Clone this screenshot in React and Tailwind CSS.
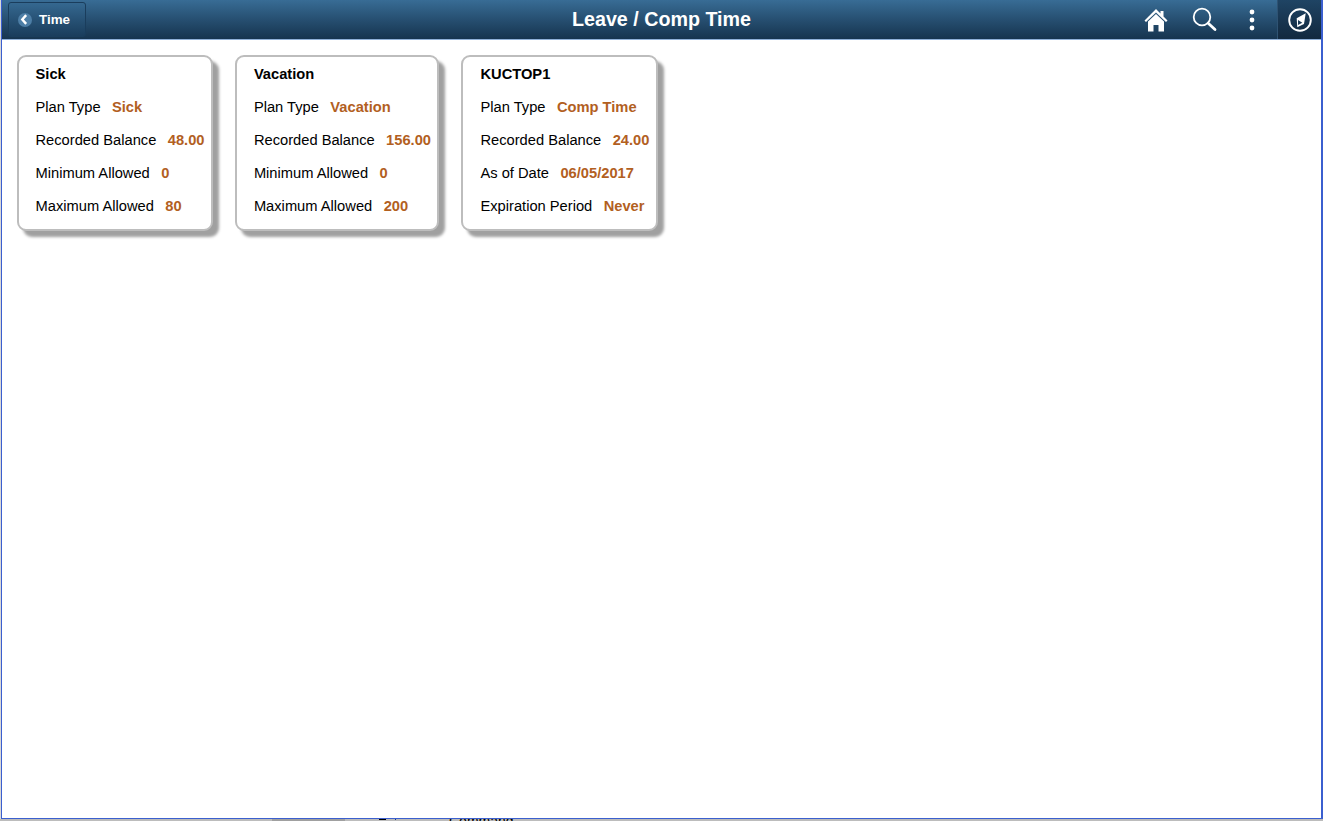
const FONT = "font-['Liberation_Sans',Arial,sans-serif]";

function Row({ label, value }) {
  return (
    <div className="flex h-[33px] items-center whitespace-nowrap">
      <span className="text-[14.7px] text-black">{label}</span>
      <span className="ml-[11.4px] text-[14.7px] font-bold text-[#b2601f]">{value}</span>
    </div>
  );
}

function Card({ title, rows }) {
  return (
    <div className="rounded-[9px] border-2 border-[#bdbdbd] bg-white pb-[6px] pl-[17px] pr-[6.2px] shadow-[6px_6px_3px_#a0a0a0]">
      <div className="flex h-[34px] items-center pt-[1px] text-[14.7px] font-bold text-black">{title}</div>
      {rows.map(([l, v]) => (
        <Row key={l} label={l} value={v} />
      ))}
    </div>
  );
}

const cards = [
  { title: "Sick", rows: [["Plan Type", "Sick"], ["Recorded Balance", "48.00"], ["Minimum Allowed", "0"], ["Maximum Allowed", "80"]] },
  { title: "Vacation", rows: [["Plan Type", "Vacation"], ["Recorded Balance", "156.00"], ["Minimum Allowed", "0"], ["Maximum Allowed", "200"]] },
  { title: "KUCTOP1", rows: [["Plan Type", "Comp Time"], ["Recorded Balance", "24.00"], ["As of Date", "06/05/2017"], ["Expiration Period", "Never"]] },
];

export default function App() {
  return (
    <div className={`${FONT} flex h-[821px] w-[1323px] flex-col overflow-hidden bg-[#d8d8d8]`}>
      <div className="ml-[1px] flex h-[819px] shrink-0 flex-col border-b-[1.5px] border-l-[1.5px] border-r-2 border-[#3b5fcf] bg-white">
        <header className="grid h-[40px] shrink-0 grid-cols-[1fr_auto_1fr] items-center border-b border-[#8fb0d8] bg-gradient-to-b from-[#386c95] to-[#16344f]">
          <div className="flex pl-[5.5px]">
            <button className="flex h-[35px] w-[78px] items-center rounded-[3px] border border-[#1a3d5c] bg-gradient-to-b from-[#356890] to-[#1a3d5c] pl-[9px] text-[13.4px] font-bold text-white">
              <span className="mr-[7.5px] flex h-[14px] w-[14px] items-center justify-center rounded-full bg-[#4d7ea6]">
                <svg width="9" height="11" viewBox="0 0 8 10" fill="none" stroke="white" strokeWidth="2.2">
                  <path d="M5.5 1 L2 5 L5.5 9" />
                </svg>
              </span>
              <span className="pt-[1px]">Time</span>
            </button>
          </div>
          <h1 className="text-center text-[19.7px] font-bold text-white">Leave / Comp Time</h1>
          <div className="flex h-[39px] items-center justify-end">
            <svg className="mr-[24px]" width="24" height="24" viewBox="0 0 24 24" fill="white">
              <path d="M12 1 L0.5 12.5 L2 14 L12 4.6 L22 14 L23.5 12.5 L19.5 8.5 L19.5 3 L16.5 3 L16.5 5.5 Z" />
              <path d="M12 6 L4 13.5 L4 23.5 L9.5 23.5 L9.5 17 L14.5 17 L14.5 23.5 L20 23.5 L20 13.5 Z" />
            </svg>
            <svg className="mr-[32px]" width="25" height="25" viewBox="0 0 25 25" fill="none" stroke="white" strokeLinecap="round">
              <circle cx="10" cy="10" r="8.3" strokeWidth="1.8" />
              <path d="M16.2 16.2 L23 22.5" strokeWidth="2.8" />
            </svg>
            <svg className="mr-[22px]" width="6" height="22" viewBox="0 0 6 22" fill="white">
              <circle cx="3" cy="3" r="2.4" />
              <circle cx="3" cy="11" r="2.4" />
              <circle cx="3" cy="19" r="2.4" />
            </svg>
            <div className="flex h-[39px] w-[44px] items-center border-l border-[#2f5373] bg-gradient-to-b from-[#1f4464] to-[#12293f] pl-[10px]">
              <svg width="24" height="24" viewBox="0 0 24 24" fill="none">
                <circle cx="12" cy="12" r="10.8" stroke="white" strokeWidth="1.9" />
                <path d="M17.7 5.3 L16 16 L9.3 19.3 L8.7 10.3 Z" fill="white" />
                <path d="M10 12 L10 17 L14.3 14.7 Z" fill="#1a3a56" />
              </svg>
            </div>
          </div>
        </header>
        <main className="flex items-start gap-[22.2px] pl-[14.5px] pt-[15px]">
          {cards.map((c) => (
            <Card key={c.title} {...c} />
          ))}
        </main>
      </div>
      <div className="flex h-[2px] shrink-0 overflow-hidden bg-[#bcbcbc]">
        <div className="ml-[272px] w-[73px] bg-[#a0a0a0]" />
        <div className="ml-[34px] h-[1px] w-[7px] bg-black" />
        <div className="ml-[9px] h-[1px] w-[1px] bg-[#1a3d8c]" />
        <div className="ml-[53px] text-[14px] leading-[5px] text-black">Command</div>
      </div>
    </div>
  );
}
